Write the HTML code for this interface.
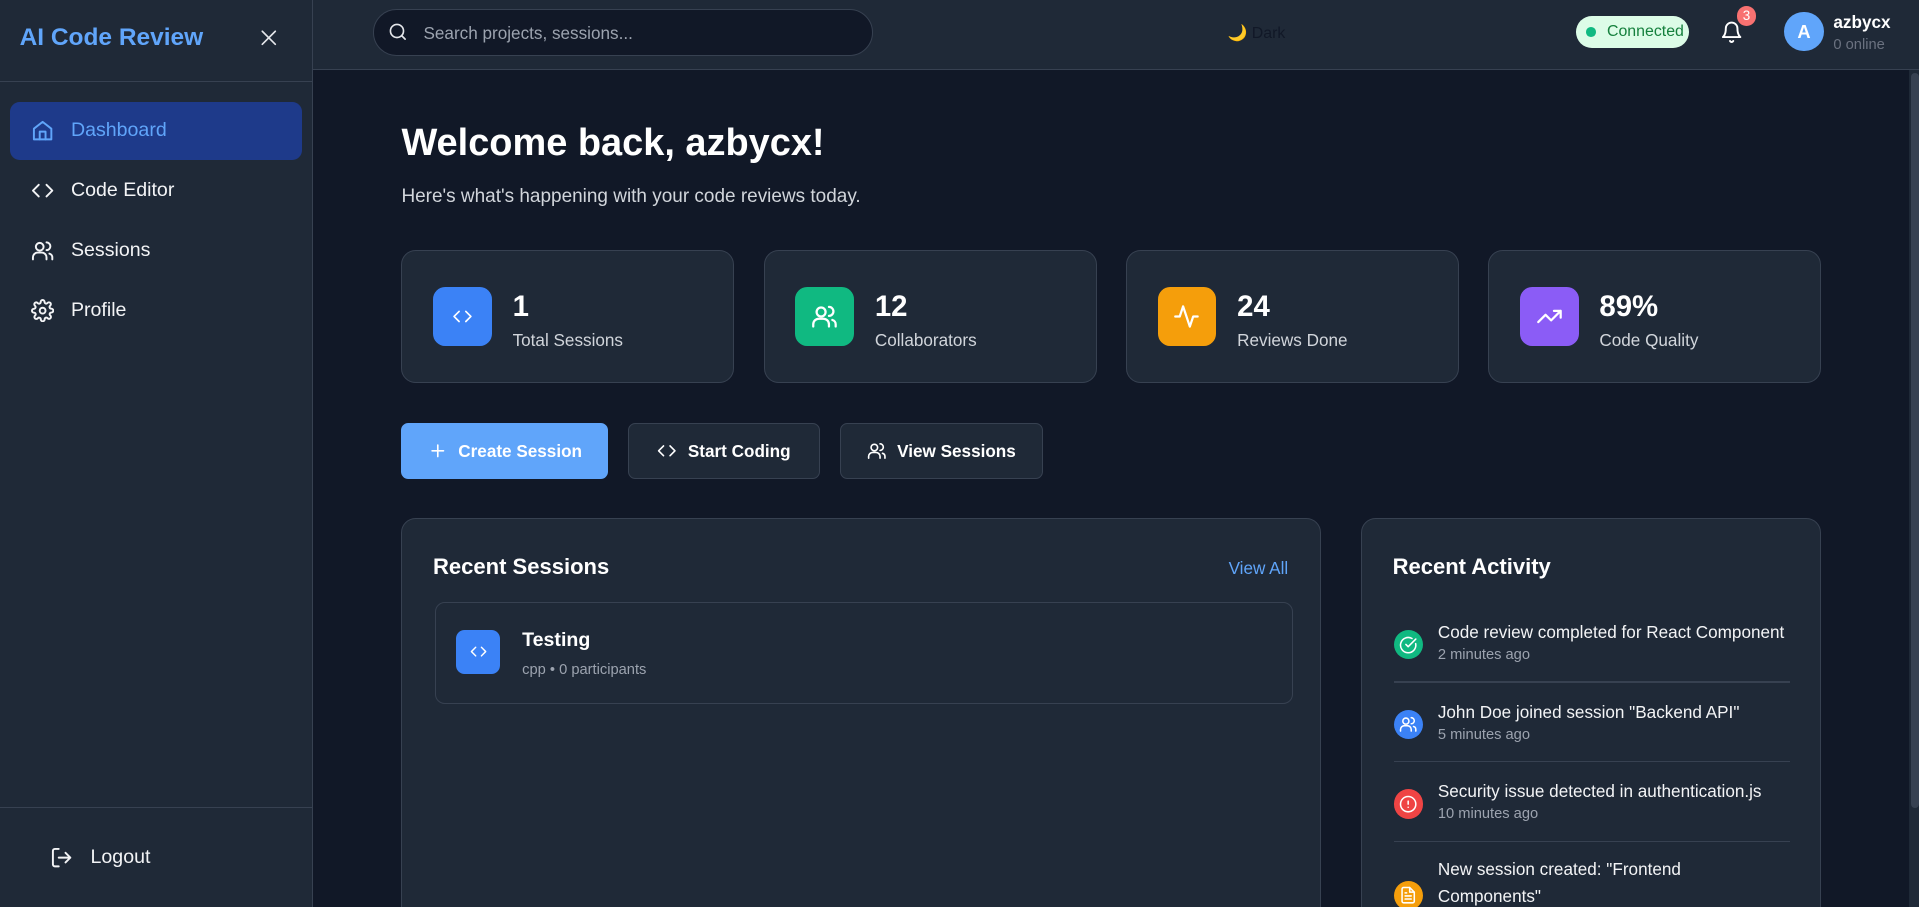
<!DOCTYPE html>
<html><head><meta charset="utf-8"><style>
*{box-sizing:border-box;margin:0;padding:0}
html,body{width:1919px;height:907px;overflow:hidden;background:#111827}
#w{zoom:1.2239;width:1568px;height:741px;position:relative;font-family:"Liberation Sans",sans-serif;color:#fff;background:#111827;overflow:hidden}
.a{position:absolute}
svg{fill:none;stroke:currentColor;stroke-width:2;stroke-linecap:round;stroke-linejoin:round}
.nav{position:absolute;left:8px;width:239px;height:48px;border-radius:8px;display:flex;align-items:center;padding-left:17px;font-size:16px;color:#f3f4f6}
.nav svg{width:19px;height:19px;margin-right:14px}
.card{position:absolute;top:204px;width:272px;height:109px;background:#1f2937;border:1px solid #374151;border-radius:12px}
.ib{position:absolute;left:25px;top:30px;width:48px;height:48px;border-radius:10px;display:flex;align-items:center;justify-content:center}
.ib svg{width:22px;height:22px}
.num{position:absolute;left:90px;top:32px;font-size:24px;font-weight:bold}
.lab{position:absolute;left:90px;top:65px;font-size:14px;color:#d1d5db}
.btn{position:absolute;top:346px;height:45px;border-radius:6px;display:flex;align-items:center;justify-content:center;font-size:14px;font-weight:bold}
.btn svg{width:16px;height:16px;margin-right:9px}
.act{position:absolute;left:26px;width:324px}
.act .ic{position:absolute;left:0;width:24px;height:24px;border-radius:50%;display:flex;align-items:center;justify-content:center}
.act .ic svg{width:15px;height:15px}
.act .t{position:absolute;left:36px;font-size:14px;color:#f3f4f6;line-height:22px}
.act .s{position:absolute;left:36px;font-size:12px;color:#9ca3af}
.hr{position:absolute;left:26px;width:324px;height:1px;background:#374151}
</style></head><body><div id="w">
<!-- sidebar -->
<div class="a" style="left:0;top:0;width:256px;height:741px;background:#1f2937;border-right:1px solid #374151"></div>
<div class="a" style="left:16px;top:20px;font-size:20px;font-weight:bold;color:#60a5fa">AI Code Review</div>
<svg class="a" style="left:212px;top:23px;width:16px;height:16px;color:#e5e7eb" viewBox="0 0 24 24"><path d="M4 4l16 16M20 4L4 20"/></svg>
<div class="a" style="left:0;top:66px;width:256px;height:1px;background:#374151"></div>
<div class="nav" style="top:83px;background:#1e3a8a;color:#60a5fa"><svg viewBox="0 0 24 24"><path d="M3 10l9-7 9 7v11H3z"/><path d="M9 21v-8h6v8"/></svg>Dashboard</div>
<div class="nav" style="top:132px"><svg viewBox="0 0 24 24"><path d="M8 6l-6 6 6 6M16 6l6 6-6 6"/></svg>Code Editor</div>
<div class="nav" style="top:181px"><svg viewBox="0 0 24 24"><circle cx="9" cy="8" r="4"/><path d="M2 21v-2a5 5 0 0 1 5-5h4a5 5 0 0 1 5 5v2M16 3.5a4 4 0 0 1 0 8M22 21v-2a4 4 0 0 0-3-3.9"/></svg>Sessions</div>
<div class="nav" style="top:230px"><svg viewBox="0 0 24 24"><circle cx="12" cy="12" r="3"/><path d="M19.4 15a1.7 1.7 0 0 0 .3 1.8l.1.1a2 2 0 1 1-2.8 2.8l-.1-.1a1.7 1.7 0 0 0-1.8-.3 1.7 1.7 0 0 0-1 1.5V21a2 2 0 1 1-4 0v-.1a1.7 1.7 0 0 0-1.1-1.5 1.7 1.7 0 0 0-1.8.3l-.1.1a2 2 0 1 1-2.8-2.8l.1-.1a1.7 1.7 0 0 0 .3-1.8 1.7 1.7 0 0 0-1.5-1H3a2 2 0 1 1 0-4h.1a1.7 1.7 0 0 0 1.5-1.1 1.7 1.7 0 0 0-.3-1.8l-.1-.1a2 2 0 1 1 2.8-2.8l.1.1a1.7 1.7 0 0 0 1.8.3H9a1.7 1.7 0 0 0 1-1.5V3a2 2 0 1 1 4 0v.1a1.7 1.7 0 0 0 1 1.5 1.7 1.7 0 0 0 1.8-.3l.1-.1a2 2 0 1 1 2.8 2.8l-.1.1a1.7 1.7 0 0 0-.3 1.8V9a1.7 1.7 0 0 0 1.5 1H21a2 2 0 1 1 0 4h-.1a1.7 1.7 0 0 0-1.5 1z"/></svg>Profile</div>
<div class="a" style="left:0;top:659px;width:256px;height:1px;background:#374151"></div>
<div class="nav" style="top:677px;left:24px;padding-left:17px"><svg viewBox="0 0 24 24"><path d="M9 21H5a2 2 0 0 1-2-2V5a2 2 0 0 1 2-2h4M16 17l5-5-5-5M21 12H9"/></svg>Logout</div>
<!-- header -->
<div class="a" style="left:256px;top:0;width:1312px;height:57px;background:#1f2937;border-bottom:1px solid #374151"></div>
<div class="a" style="left:305px;top:7px;width:408px;height:39px;border-radius:20px;background:#111827;border:1px solid #374151"></div>
<svg class="a" style="left:317px;top:18px;width:16px;height:16px;color:#e5e7eb" viewBox="0 0 24 24"><circle cx="11" cy="11" r="8"/><path d="M21 21l-4.3-4.3"/></svg>
<div class="a" style="left:346px;top:19px;font-size:14px;color:#9ca3af">Search projects, sessions...</div>
<div class="a" style="left:1003px;top:19px;font-size:13px;color:#111827"><span style="color:#f59e0b">🌙</span> Dark</div>
<div class="a" style="left:1288px;top:13px;width:92px;height:26px;border-radius:13px;background:#dcfce7;font-size:13px;color:#15803d;padding:6px 0 0 25px">Connected</div>
<div class="a" style="left:1296px;top:22px;width:8px;height:8px;border-radius:50%;background:#10b981"></div>
<svg class="a" style="left:1405px;top:16px;width:19px;height:20px;color:#fff" viewBox="0 0 24 24"><path d="M6 8a6 6 0 0 1 12 0c0 7 3 9 3 9H3s3-2 3-9M10.3 21a1.9 1.9 0 0 0 3.4 0"/></svg>
<div class="a" style="left:1419px;top:5px;width:16px;height:16px;border-radius:50%;background:#f87171;font-size:11px;text-align:center;line-height:16px">3</div>
<div class="a" style="left:1458px;top:10px;width:32px;height:32px;border-radius:50%;background:#60a5fa;font-size:15px;font-weight:bold;text-align:center;line-height:32px">A</div>
<div class="a" style="left:1498px;top:10px;font-size:14px;font-weight:bold">azbycx</div>
<div class="a" style="left:1498px;top:30px;font-size:12px;color:#6b7280">0 online</div>
<div class="a" style="left:1560px;top:57px;width:8px;height:684px;background:#1f2937"></div>
<div class="a" style="left:1561px;top:60px;width:7px;height:600px;border-radius:4px;background:#374151"></div>
<!-- main -->
<div class="a" style="left:328px;top:100px;font-size:31px;font-weight:bold">Welcome back, azbycx!</div>
<div class="a" style="left:328px;top:152px;font-size:15.5px;color:#d1d5db">Here's what's happening with your code reviews today.</div>
<div class="card" style="left:328px"><div class="ib" style="background:#3b82f6"><svg viewBox="0 0 24 24"><path d="M8 6l-6 6 6 6M16 6l6 6-6 6" transform="translate(3 3) scale(.75)"/></svg></div><div class="num">1</div><div class="lab">Total Sessions</div></div>
<div class="card" style="left:624px"><div class="ib" style="background:#10b981"><svg viewBox="0 0 24 24"><circle cx="9" cy="8" r="4"/><path d="M2 21v-2a5 5 0 0 1 5-5h4a5 5 0 0 1 5 5v2M16 3.5a4 4 0 0 1 0 8M22 21v-2a4 4 0 0 0-3-3.9"/></svg></div><div class="num">12</div><div class="lab">Collaborators</div></div>
<div class="card" style="left:920px"><div class="ib" style="background:#f59e0b"><svg viewBox="0 0 24 24"><path d="M22 12h-4l-3 9L9 3l-3 9H2"/></svg></div><div class="num">24</div><div class="lab">Reviews Done</div></div>
<div class="card" style="left:1216px"><div class="ib" style="background:#8b5cf6"><svg viewBox="0 0 24 24"><path d="M22 7l-8.5 8.5-5-5L2 17M16 7h6v6"/></svg></div><div class="num">89%</div><div class="lab">Code Quality</div></div>
<div class="btn" style="left:328px;width:169px;background:#60a5fa"><svg viewBox="0 0 24 24"><path d="M12 5v14M5 12h14"/></svg>Create Session</div>
<div class="btn" style="left:513px;width:157px;background:#1f2937;border:1px solid #374151"><svg viewBox="0 0 24 24"><path d="M8 6l-6 6 6 6M16 6l6 6-6 6"/></svg>Start Coding</div>
<div class="btn" style="left:686px;width:166px;background:#1f2937;border:1px solid #374151"><svg viewBox="0 0 24 24"><circle cx="9" cy="8" r="4"/><path d="M2 21v-2a5 5 0 0 1 5-5h4a5 5 0 0 1 5 5v2M16 3.5a4 4 0 0 1 0 8M22 21v-2a4 4 0 0 0-3-3.9"/></svg>View Sessions</div>
<!-- recent sessions -->
<div class="a" style="left:328px;top:423px;width:751px;height:340px;background:#1f2937;border:1px solid #374151;border-radius:12px">
<div class="a" style="left:25px;top:29px;font-size:18px;font-weight:bold">Recent Sessions</div>
<div class="a" style="left:675px;top:32px;font-size:14px;color:#60a5fa">View All</div>
<div class="a" style="left:27px;top:68px;width:701px;height:83px;border:1px solid #374151;border-radius:8px">
<div class="a" style="left:16px;top:22px;width:36px;height:36px;border-radius:7px;background:#3b82f6;display:flex;align-items:center;justify-content:center"><svg style="width:14px;height:14px" viewBox="0 0 24 24"><path d="M8 6l-6 6 6 6M16 6l6 6-6 6"/></svg></div>
<div class="a" style="left:70px;top:21px;font-size:16px;font-weight:bold">Testing</div>
<div class="a" style="left:70px;top:48px;font-size:12px;color:#9ca3af">cpp • 0 participants</div>
</div></div>
<!-- recent activity -->
<div class="a" style="left:1112px;top:423px;width:376px;height:340px;background:#1f2937;border:1px solid #374151;border-radius:12px">
<div class="a" style="left:25px;top:29px;font-size:18px;font-weight:bold">Recent Activity</div>
<div class="act" style="top:82px"><div class="ic" style="top:9px;background:#10b981"><svg viewBox="0 0 24 24"><path d="M21.8 10A10 10 0 1 1 17 3.3"/><path d="M9 11l3 3L22 4"/></svg></div><div class="t" style="top:0">Code review completed for React Component</div><div class="s" style="top:23px">2 minutes ago</div></div>
<div class="hr" style="top:133px"></div>
<div class="act" style="top:147px"><div class="ic" style="top:9px;background:#3b82f6"><svg viewBox="0 0 24 24"><circle cx="9" cy="8" r="4"/><path d="M2 21v-2a5 5 0 0 1 5-5h4a5 5 0 0 1 5 5v2M16 3.5a4 4 0 0 1 0 8M22 21v-2a4 4 0 0 0-3-3.9"/></svg></div><div class="t" style="top:0">John Doe joined session "Backend API"</div><div class="s" style="top:23px">5 minutes ago</div></div>
<div class="hr" style="top:198px"></div>
<div class="act" style="top:212px"><div class="ic" style="top:9px;background:#ef4444"><svg viewBox="0 0 24 24"><circle cx="12" cy="12" r="10"/><path d="M12 8v4M12 16h.01"/></svg></div><div class="t" style="top:0">Security issue detected in authentication.js</div><div class="s" style="top:23px">10 minutes ago</div></div>
<div class="hr" style="top:263px"></div>
<div class="act" style="top:276px"><div class="ic" style="top:20px;background:#f59e0b"><svg viewBox="0 0 24 24"><path d="M14 2H6a2 2 0 0 0-2 2v16a2 2 0 0 0 2 2h12a2 2 0 0 0 2-2V8z"/><path d="M14 2v6h6M16 13H8M16 17H8M10 9H8"/></svg></div><div class="t" style="top:0;width:250px">New session created: "Frontend Components"</div></div>
</div>
</div></body></html>
